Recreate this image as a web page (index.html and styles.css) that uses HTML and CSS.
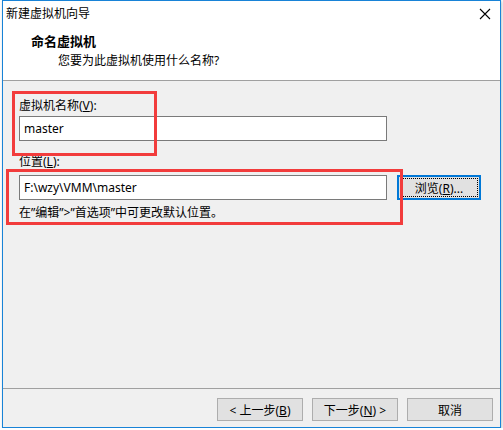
FILE: index.html
```html
<!doctype html>
<html lang="zh-CN">
<head>
    <meta charset="UTF-8">
    <title>新建虚拟机向导</title>
    <link rel="stylesheet" href="styles.css">
</head>
<body>
    <div class="window">
        <div class="titlebar">
            <span class="title">新建虚拟机向导</span>
            <svg class="close" width="12" height="12" viewBox="0 0 12 12">
                <path d="M1 1 L11 11 M11 1 L1 11" stroke="#000" stroke-width="1.1" fill="none"/>
            </svg>
        </div>
        <div class="header">
            <div class="heading">命名虚拟机</div>
            <div class="subheading">您要为此虚拟机使用什么名称?</div>
        </div>
        <div class="content">
            <label class="label" for="vmname">虚拟机名称(<u>V</u>):</label>
            <input class="field" type="text" id="vmname" value="master">

            <label class="label second" for="location">位置(<u>L</u>):</label>
            <div class="row">
                <input class="field" type="text" id="location" value="F:\wzy\VMM\master">
                <button class="btn browse">浏览(<u>R</u>)...</button>
            </div>
            <div class="hint">在”编辑”&gt;”首选项”中可更改默认位置。</div>
        </div>
        <div class="footer">
            <button class="btn">&lt; 上一步(<u>B</u>)</button>
            <button class="btn">下一步(<u>N</u>) &gt;</button>
            <button class="btn">取消</button>
        </div>

        <div class="mark mark-name"></div>
        <div class="mark mark-location"></div>
    </div>
</body>
</html>
```

FILE: styles.css
```css
body {
    margin: 0;
    background: #fff;
    font-family: "Noto Sans", "Noto Sans CJK SC", sans-serif;
    font-size: 12px;
    color: #000;
}
.window {
    position: relative;
    margin-left: 2px;
    width: 497px;
    height: 426px;
    border: 1px solid #1883d7;
    background: #f0f0f0;
    display: flex;
    flex-direction: column;
    box-shadow: 1px 1px 3px rgba(0, 0, 0, 0.25);
}
.titlebar {
    height: 25px;
    background: #fff;
    display: flex;
    align-items: center;
    justify-content: space-between;
    padding: 0 9px 0 3px;
}
.title {
    line-height: 16px;
}
.header {
    height: 55px;
    box-sizing: border-box;
    background: #fff;
    border-bottom: 1px solid #a0a0a0;
    padding: 6px 0 0 28px;
}
.heading {
    font-size: 13px;
    font-weight: bold;
    line-height: 18px;
}
.subheading {
    line-height: 18px;
    margin-top: 2px;
    padding-left: 27px;
}
.content {
    flex: 1;
    padding: 16px 0 0 16px;
    border-bottom: 1px solid #a0a0a0;
}
.label {
    display: block;
    line-height: 18px;
}
.label.second {
    margin-top: 12px;
}
.field {
    display: block;
    box-sizing: border-box;
    width: 368px;
    height: 25px;
    margin: 1px 0 0 0;
    padding: 0 4px;
    border: 1px solid #7a7a7a;
    background: #fff;
    font-family: inherit;
    font-size: 12px;
    color: #000;
}
.row {
    display: flex;
    align-items: center;
    margin-top: 4px;
}
.row .field {
    margin: 0;
}
.hint {
    margin-top: 4px;
    line-height: 18px;
}
.btn {
    box-sizing: border-box;
    width: 86px;
    height: 23px;
    padding: 0;
    border: 1px solid #adadad;
    background: #e1e1e1;
    font-family: inherit;
    font-size: 12px;
    color: #000;
}
.browse {
    width: 84px;
    height: 25px;
    margin-left: 10px;
    border: 2px solid #0078d7;
    outline: 1px dotted #000;
    outline-offset: -4px;
}
.footer {
    height: 38px;
    display: flex;
    justify-content: flex-end;
    gap: 9px;
    padding: 9px 7px 0 0;
    box-sizing: border-box;
}
.mark {
    position: absolute;
    border: 3px solid #f23c3c;
}
.mark-name {
    left: 9px;
    top: 90px;
    width: 139px;
    height: 59px;
}
.mark-location {
    left: 3px;
    top: 168px;
    width: 391px;
    height: 50px;
}
```
